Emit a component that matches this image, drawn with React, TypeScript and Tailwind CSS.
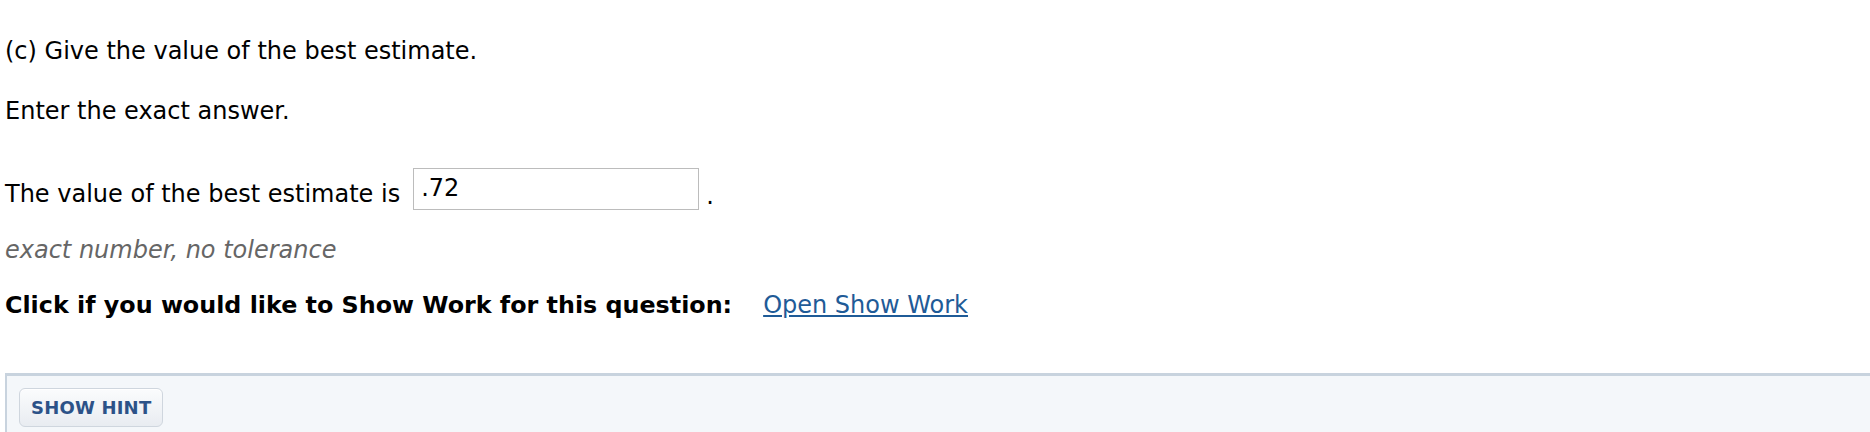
import React from 'react';

export default function App() {
  return (
    <div className="min-h-screen bg-white font-['DejaVu_Sans',Verdana,sans-serif] text-[24px] leading-[28px] text-black">
      <div className="pl-[5px] pt-[37px]">
        <p>(c) Give the value of the best estimate.</p>
        <p className="mt-[32px]">Enter the exact answer.</p>

        <div className="mt-[43px] flex items-start">
          <span className="mt-[12px]">The value of the best estimate is</span>
          <div className="ml-[13px] flex h-[42px] w-[286px] items-center border border-[#bcbcbc] bg-white pl-[7px] pb-[3px]">
            .72
          </div>
          <span className="ml-[7px] mt-[14px]">.</span>
        </div>

        <p className="mt-[26px] italic text-[#666666]">exact number, no tolerance</p>

        <div className="mt-[27px] flex items-center">
          <span className="text-[23.8px] font-bold">Click if you would like to Show Work for this question:</span>
          <a href="#" className="ml-[31px] text-[#1f5b97] underline underline-offset-2">
            Open Show Work
          </a>
        </div>
      </div>

      <div className="mt-[54px] ml-[5px] border-t-[3px] border-l-[2px] border-[#c8d3de] bg-[#f4f7fa] px-[12px] pt-[12px] pb-[6px]">
        <button className="h-[39px] rounded-[6px] border border-[#cfd6de] bg-gradient-to-b from-[#fbfcfd] to-[#e8ecf1] px-[11px] text-[18px] font-bold tracking-[0.2px] text-[#2c5288] shadow-[inset_0_1px_0_#ffffff]">
          SHOW HINT
        </button>
      </div>
    </div>
  );
}
